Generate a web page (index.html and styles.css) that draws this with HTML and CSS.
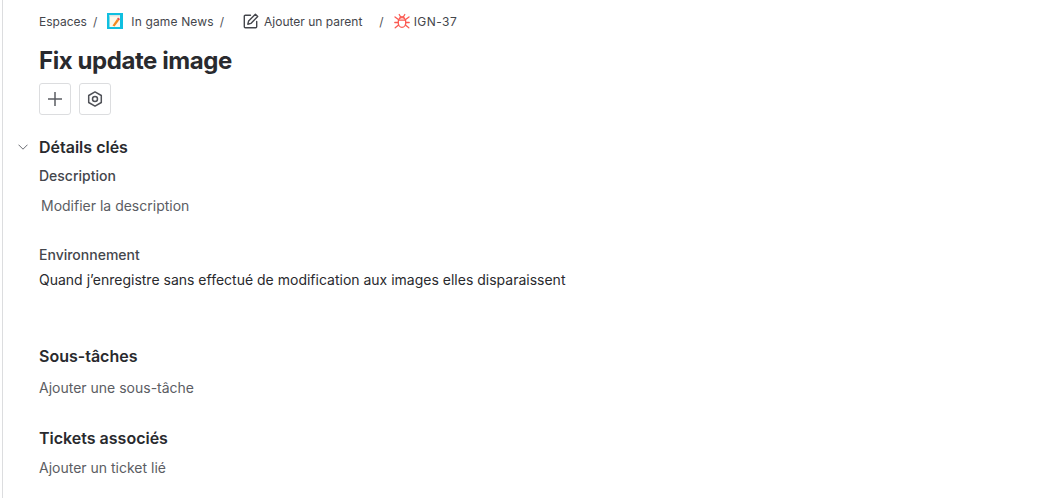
FILE: index.html
```html
<!DOCTYPE html>
<html lang="fr">
<head>
    <meta charset="UTF-8">
    <title>Fix update image</title>
    <link rel="stylesheet" href="styles.css">
</head>
<body>
    <main class="issue">
        <nav class="breadcrumb">
            <span class="crumb">Espaces</span>
            <span class="sep">/</span>
            <svg class="project-icon" width="16" height="16" viewBox="0 0 16 16">
                <rect width="16" height="16" fill="#10bfe0"/>
                <rect x="2.500" y="2" width="10.500" height="12" fill="#fdf8ea"/>
                <rect x="2.500" y="2" width="10.500" height="1.500" fill="#dfe3e3"/>
                <path d="M5.500 12.500 L10 6 L12 7.400 L7.500 13.500 Z" fill="#f58a1f"/>
                <path d="M10 6 L11 4.500 L13 5.900 L12 7.400 Z" fill="#e5484d"/>
            </svg>
            <span class="crumb project">In game News</span>
            <span class="sep">/</span>
            <svg class="edit-icon" width="16" height="16" viewBox="0 0 16 16" fill="none" stroke="#44464c" stroke-width="1.4" stroke-linecap="round" stroke-linejoin="round">
                <path d="M7.500 2.300H2.300a1 1 0 0 0-1 1v10.400a1 1 0 0 0 1 1h10.400a1 1 0 0 0 1-1V8.500"/>
                <path d="M12.400 1.300l2.300 2.300-6.800 6.800-3.100.8.800-3.100z"/>
            </svg>
            <span class="crumb parent">Ajouter un parent</span>
            <span class="sep sep-wide">/</span>
            <svg class="bug-icon" width="16" height="16" viewBox="0 0 16 16" fill="none" stroke="#fb5a52" stroke-width="1.3" stroke-linecap="round">
                <ellipse cx="8" cy="9.500" rx="3.800" ry="4.900"/>
                <path d="M4.400 7.200h7.200"/>
                <path d="M5.300 5.600a2.800 2.800 0 0 1 5.400 0"/>
                <path d="M5.200 1.500l1.500 2.500M10.800 1.500L9.300 4"/>
                <path d="M1 4l3.400 2.600M15 4l-3.400 2.600M.8 9.500h3.400M15.200 9.500h-3.400M1.200 14.800l3.400-2.800M14.800 14.800l-3.400-2.800"/>
            </svg>
            <span class="crumb key">IGN-37</span>
        </nav>

        <h1 class="title">Fix update image</h1>

        <div class="actions">
            <button class="icon-btn" type="button">
                <svg width="16" height="16" viewBox="0 0 16 16" fill="none" stroke="#5b5d63" stroke-width="1.5"><path d="M8 1v14M1 8h14"/></svg>
            </button>
            <button class="icon-btn" type="button">
                <svg width="16" height="16" viewBox="0 0 16 16" fill="none" stroke="#505258" stroke-width="1.5" stroke-linejoin="round"><path d="M8 .9l6.300 3.600v7L8 15.100l-6.300-3.600v-7z"/><circle cx="8" cy="8" r="2.500"/></svg>
            </button>
        </div>

        <section class="details">
            <h2 class="section-title">
                <svg class="chevron" width="10" height="6" viewBox="0 0 10 6" fill="none" stroke="#6b6d73" stroke-width="1"><path d="M.5.700L5 5.200 9.500.700"/></svg>
                Détails clés
            </h2>
            <h3 class="label">Description</h3>
            <p class="placeholder indent">Modifier la description</p>
            <h3 class="label env-label">Environnement</h3>
            <p class="body-text">Quand j’enregistre sans effectué de modification aux images elles disparaissent</p>
        </section>

        <section class="subtasks">
            <h2 class="section-title">Sous-tâches</h2>
            <p class="placeholder add-subtask">Ajouter une sous-tâche</p>
        </section>

        <section class="links">
            <h2 class="section-title">Tickets associés</h2>
            <p class="placeholder">Ajouter un ticket lié</p>
        </section>
    </main>
</body>
</html>
```

FILE: styles.css
```css
* {
    box-sizing: border-box;
}
html, body {
    height: 100%;
}
body {
    margin: 0;
    padding-left: 2px;
    background-color: #fff;
    color: #292a2e;
    font-family: Inter, "Noto Sans", sans-serif;
    overflow: hidden;
}
.issue {
    height: 100%;
    padding: 12px 0 0 36px;
    border-left: 1px solid #dcdddf;
}
/* Breadcrumb */
.breadcrumb {
    display: flex;
    align-items: center;
    height: 18px;
    font-size: 12px;
    color: #44464c;
}
.sep {
    margin-left: 6px;
    color: #505258;
}
.project-icon {
    margin-left: 10px;
}
.project {
    margin-left: 8px;
    letter-spacing: .15px;
}
.edit-icon {
    margin-left: 19px;
}
.parent {
    margin-left: 5px;
}
.sep-wide {
    margin-left: 17px;
}
.bug-icon {
    margin-left: 10px;
    margin-right: 4px;
}
.key {
    letter-spacing: .45px;
}
/* Title */
.title {
    margin: 15px 0 0;
    font-size: 24px;
    line-height: 32px;
    font-weight: 700;
    letter-spacing: -.42px;
    color: #292a2e;
}
.actions {
    display: flex;
    gap: 8px;
    margin-top: 6px;
}
.icon-btn {
    display: flex;
    align-items: center;
    justify-content: center;
    width: 32px;
    height: 32px;
    padding: 0;
    background-color: #fff;
    border: 1px solid #dcdddf;
    border-radius: 3px;
}
/* Sections */
.details {
    margin-top: 22px;
}
.section-title {
    position: relative;
    margin: 0;
    font-size: 16px;
    line-height: 20px;
    font-weight: 600;
    color: #292a2e;
}
.chevron {
    position: absolute;
    left: -21px;
    top: 7px;
}
.label {
    margin: 9px 0 0;
    font-size: 14px;
    line-height: 20px;
    font-weight: 500;
    color: #44464c;
}
.env-label {
    margin-top: 29px;
}
.placeholder {
    margin: 10px 0 0;
    font-size: 14px;
    line-height: 20px;
    color: #5b5d63;
}
.add-subtask {
    margin-top: 12px;
}
.indent {
    margin-left: 2px;
}
.body-text {
    margin: 5px 0 0;
    font-size: 14px;
    line-height: 20px;
    color: #292a2e;
}
.subtasks {
    margin-top: 56px;
}
.links {
    margin-top: 30px;
}
```
